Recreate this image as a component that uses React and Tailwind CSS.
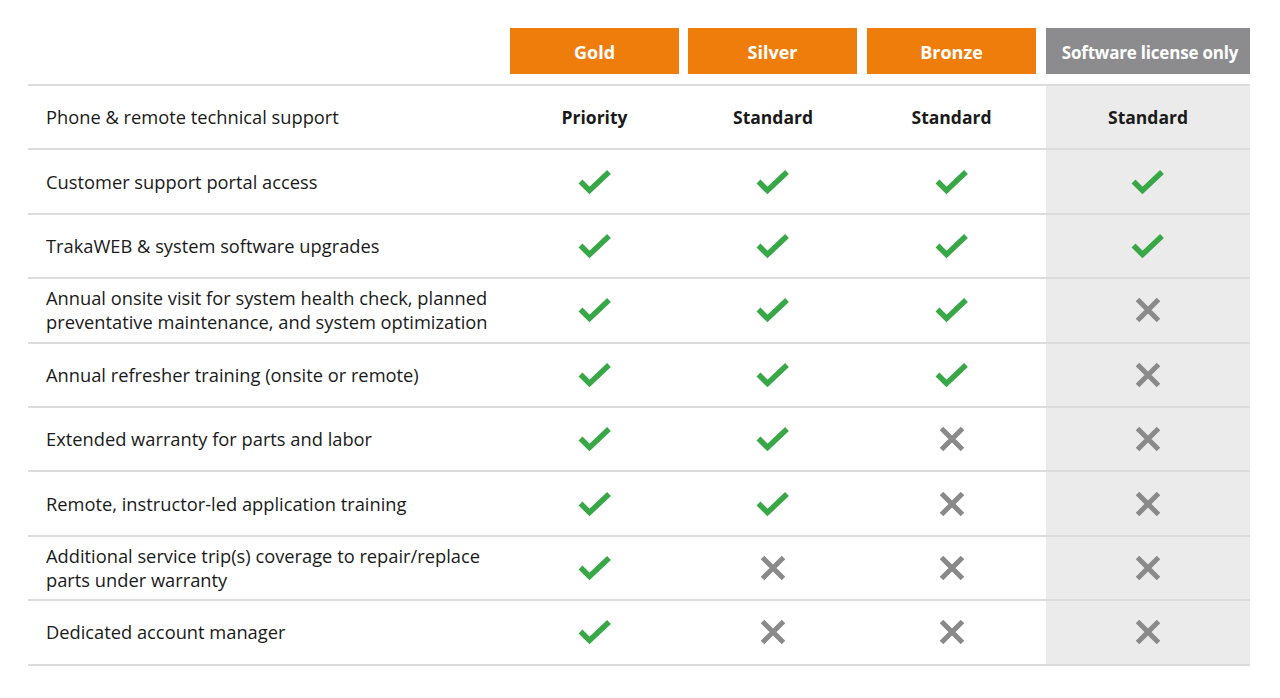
import React from "react";

const Check = () => (
  <svg width="34" height="26" viewBox="0 0 34 26" className="block">
    <polyline points="2.5,12.5 11.5,21.5 31,3" fill="none" stroke="#38a847" strokeWidth="5.5" strokeLinecap="butt" strokeLinejoin="miter" />
  </svg>
);

const Cross = () => (
  <svg width="26" height="26" viewBox="0 0 26 26" className="block">
    <path d="M2.5 2.5 L23.5 23.5 M23.5 2.5 L2.5 23.5" fill="none" stroke="#8a8a8b" strokeWidth="5" />
  </svg>
);

const rows = [
  { label: ["Phone & remote technical support"], v: ["Priority", "Standard", "Standard", "Standard"] },
  { label: ["Customer support portal access"], v: [1, 1, 1, 1] },
  { label: ["TrakaWEB & system software upgrades"], v: [1, 1, 1, 1] },
  { label: ["Annual onsite visit for system health check, planned", "preventative maintenance, and system optimization"], v: [1, 1, 1, 0] },
  { label: ["Annual refresher training (onsite or remote)"], v: [1, 1, 1, 0] },
  { label: ["Extended warranty for parts and labor"], v: [1, 1, 0, 0] },
  { label: ["Remote, instructor-led application training"], v: [1, 1, 0, 0] },
  { label: ["Additional service trip(s) coverage to repair/replace", "parts under warranty"], v: [1, 0, 0, 0] },
  { label: ["Dedicated account manager"], v: [1, 0, 0, 0] },
];

const Val = ({ v }) => {
  if (v === 1) return <Check />;
  if (v === 0) return <Cross />;
  return <span className="font-bold text-[17.5px] text-[#1a1a1a]">{v}</span>;
};

export default function App() {
  return (
    <div className="w-[1280px] h-[698px] bg-white pl-[28px] pt-[28px]" style={{ fontFamily: '"Open Sans", "Noto Sans", sans-serif' }}>
      <div className="w-[1222px]">
        <div className="grid grid-cols-[477px_179px_178px_179px_5px_204px] h-[58px] border-b-2 border-[#dcdcdc]">
          <div />
          <div className="px-[5px]">
            <div className="h-[46px] pt-[3px] bg-[#ef7d0b] flex items-center justify-center text-white font-bold text-[18px]">Gold</div>
          </div>
          <div className="pl-[4px] pr-[5px]">
            <div className="h-[46px] pt-[3px] bg-[#ef7d0b] flex items-center justify-center text-white font-bold text-[18px]">Silver</div>
          </div>
          <div className="px-[5px]">
            <div className="h-[46px] pt-[3px] bg-[#ef7d0b] flex items-center justify-center text-white font-bold text-[18px]">Bronze</div>
          </div>
          <div />
          <div>
            <div className="h-[46px] pt-[3px] pl-[4px] bg-[#8c8c8e] flex items-center justify-center text-white font-bold text-[17px] tracking-[-0.2px]">Software license only</div>
          </div>
        </div>
        {rows.map((r, i) => (
          <div key={i} className="grid grid-cols-[477px_179px_178px_179px_5px_204px] h-[64.4px] border-b-2 border-[#dcdcdc]">
            <div className="flex flex-col justify-center pl-[18px] text-[18.3px] leading-[24px] text-[#1a1a1a]">
              {r.label.map((l, j) => (
                <div key={j}>{l}</div>
              ))}
            </div>
            <div className="flex items-center justify-center"><Val v={r.v[0]} /></div>
            <div className="flex items-center justify-center"><Val v={r.v[1]} /></div>
            <div className="flex items-center justify-center"><Val v={r.v[2]} /></div>
            <div />
            <div className="flex items-center justify-center bg-[#ebebeb]"><Val v={r.v[3]} /></div>
          </div>
        ))}
      </div>
    </div>
  );
}
